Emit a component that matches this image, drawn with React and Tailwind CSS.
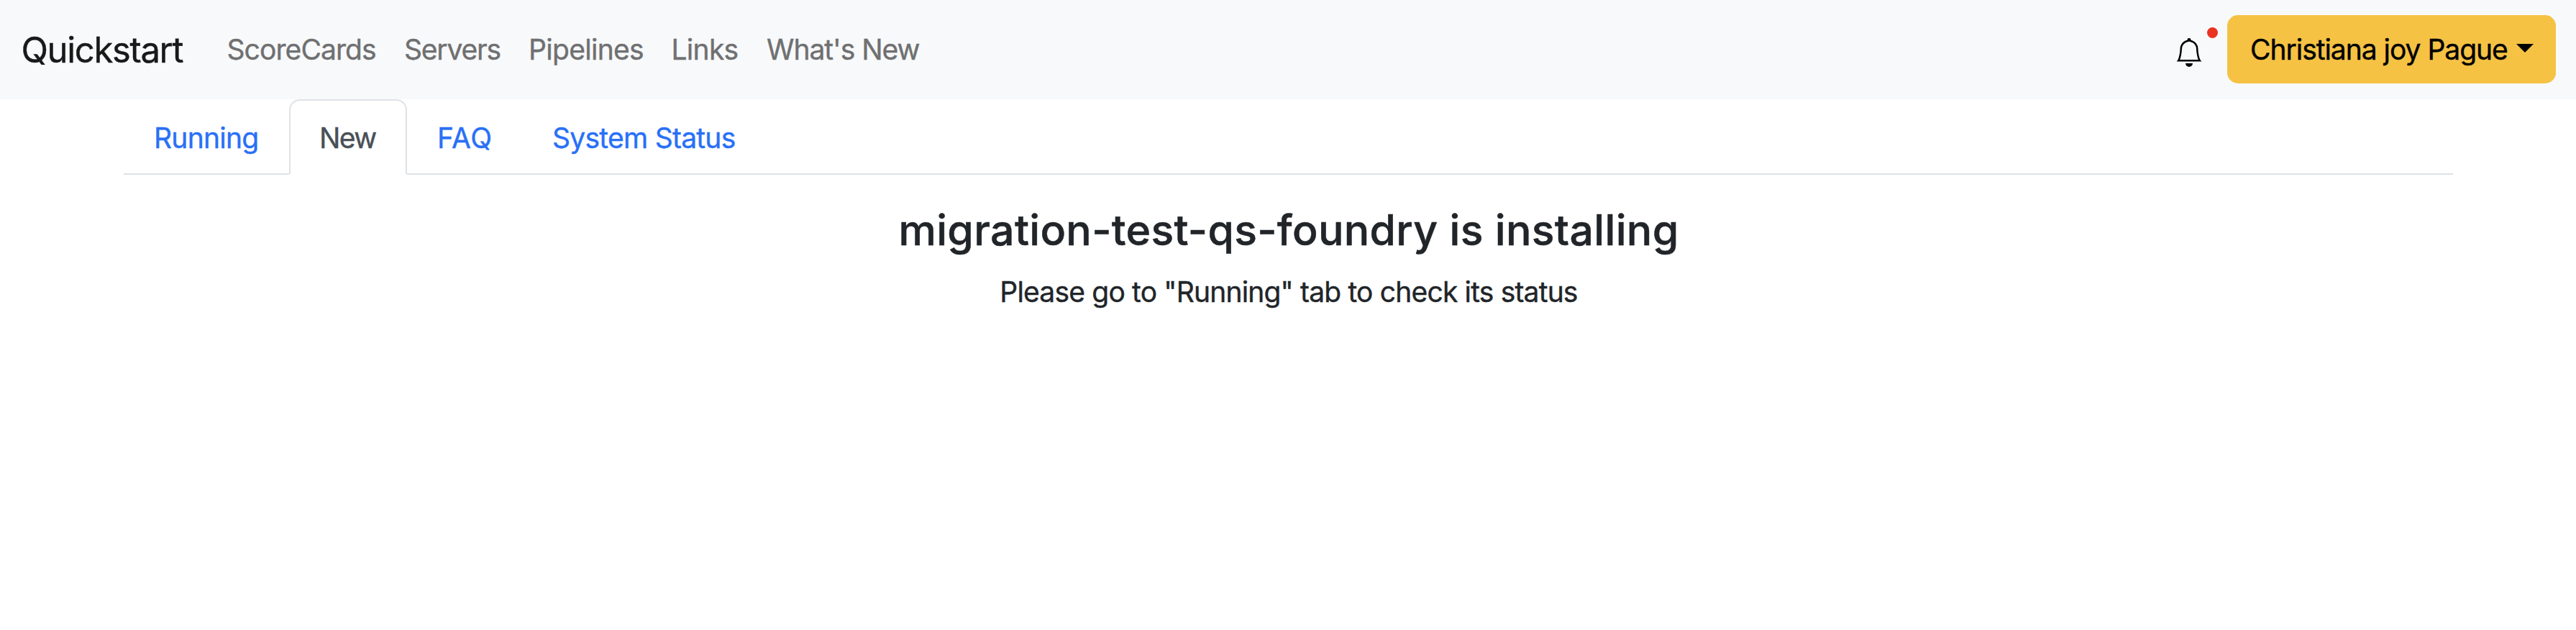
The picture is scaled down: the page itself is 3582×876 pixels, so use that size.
import { BsBell } from "react-icons/bs";

const links = [
  { label: "ScoreCards", box: "w-[246.5px] tracking-[-0.91px]" },
  { label: "Servers", box: "w-[173px] tracking-[-1.2px]" },
  { label: "Pipelines", box: "w-[198.5px] tracking-[-0.69px]" },
  { label: "Links", box: "w-[132.5px] tracking-[-0.72px]" },
  { label: "What's New", box: "w-[253px] tracking-[-1.03px]" },
];

const tabs = [
  { label: "Running", box: "w-[230px] tracking-[-0.74px]" },
  { label: "New", box: "w-[164px] tracking-[-1.57px]", active: true },
  { label: "FAQ", box: "w-[160px] tracking-[0.63px]" },
  { label: "System Status", box: "w-[336px] tracking-[-0.73px]" },
];

function Navbar() {
  return (
    <header className="flex h-[138px] items-center bg-[#f8f9fb] pr-[28px] pl-[29.5px]">
      <a href="#" className="w-[266px] text-[49px] leading-[75px] tracking-[-1.35px] whitespace-nowrap text-[#191919]">
        Quickstart
      </a>
      <nav className="flex">
        {links.map(({ label, box }) => (
          <a key={label} href="#" className={`shrink-0 pl-5 leading-[60px] whitespace-nowrap text-[#6f7071] ${box}`}>
            {label}
          </a>
        ))}
      </nav>
      <div className="ml-auto flex items-center">
        <button type="button" aria-label="Notifications" className="relative mt-2 mr-[33px] text-black">
          <BsBell className="size-10" />
          <span className="absolute -top-[15px] left-[45px] size-[15px] rounded-full bg-[#ea3323]" />
        </button>
        <button
          type="button"
          className="mb-px flex h-[95px] w-[457px] items-center rounded-[15px] bg-[#f5c244] pl-8 text-black"
        >
          <span className="w-[370px] text-left leading-[60px] tracking-[-1.03px] whitespace-nowrap">
            Christiana joy Pague
          </span>
          <span className="-mt-[3px] border-x-[12px] border-t-[12px] border-x-transparent border-t-black" />
        </button>
      </div>
    </header>
  );
}

function Tabs() {
  return (
    <ul className="flex border-b-2 border-[#dee2e6]">
      {tabs.map(({ label, box, active }) => (
        <li
          key={label}
          className={`-mb-0.5 h-[105px] rounded-t-[15px] border-2 pt-[22px] pl-10 leading-[60px] whitespace-nowrap ${box} ${
            active
              ? "border-[#dee2e6] border-b-white bg-white text-[#495057]"
              : "border-transparent text-[#2970f6]"
          }`}
        >
          <a href="#">{label}</a>
        </li>
      ))}
    </ul>
  );
}

export default function App() {
  return (
    <div className="min-h-[876px] bg-white font-['Inter',sans-serif] text-[39px] text-[#212529] [-webkit-text-stroke:0.4px]">
      <Navbar />
      <main className="mx-auto w-[3240px] pl-[1px] text-left">
        <Tabs />
        <section className="pt-[41px] pl-px text-center">
          <h3 className="text-[59px] leading-[72px] font-medium tracking-[0.3px] [-webkit-text-stroke:0.5px]">
            migration-test-qs-foundry is installing
          </h3>
          <p className="mt-5 leading-[60px] tracking-[-0.82px]">
            Please go to "Running" tab to check its status
          </p>
        </section>
      </main>
    </div>
  );
}
